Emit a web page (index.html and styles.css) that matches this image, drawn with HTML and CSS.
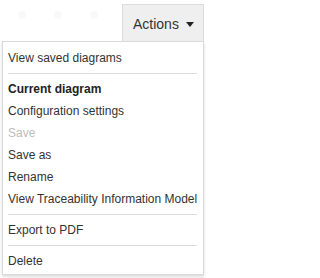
FILE: index.html
```html
<!DOCTYPE html>
<html>
<head>
<meta charset="utf-8">
<link rel="stylesheet" href="styles.css">
</head>
<body>
<div class="toolbar">
  <div class="icons">
    <span class="ghost"></span>
    <span class="ghost"></span>
    <span class="ghost"></span>
  </div>
  <div class="dropdown">
    <button class="actions">Actions <span class="caret"></span></button>
    <div class="menu">
      <div class="item">View saved diagrams</div>
      <div class="sep"></div>
      <div class="item heading">Current diagram</div>
      <div class="item">Configuration settings</div>
      <div class="item disabled">Save</div>
      <div class="item">Save as</div>
      <div class="item">Rename</div>
      <div class="item">View Traceability Information Model</div>
      <div class="sep"></div>
      <div class="item">Export to PDF</div>
      <div class="sep"></div>
      <div class="item">Delete</div>
    </div>
  </div>
</div>
</body>
</html>
```

FILE: styles.css
```css
html, body {
  margin: 0;
  padding: 0;
  background: #fff;
  font-family: "Liberation Sans", Arial, sans-serif;
  color: #333;
}
.toolbar {
  display: flex;
  justify-content: space-between;
  align-items: flex-start;
  width: 205px;
  box-sizing: border-box;
  padding-top: 4px;
  padding-right: 1px;
}
.icons {
  display: flex;
  gap: 28px;
  padding: 7px 0 0 18px;
}
.ghost {
  display: block;
  width: 8px;
  height: 8px;
  border-radius: 50%;
  background: #f9f9f9;
}
.dropdown {
  display: block;
}
.actions {
  display: flex;
  align-items: flex-start;
  gap: 7px;
  box-sizing: border-box;
  width: 82px;
  height: 44px;
  margin: 0;
  padding: 11px 10px 0 10px;
  border: 1px solid #dcdcdc;
  border-radius: 0;
  background: #efefef;
  font-family: "Liberation Sans", Arial, sans-serif;
  font-size: 14px;
  line-height: 16px;
  color: #333;
}
.caret {
  display: block;
  width: 0;
  height: 0;
  margin-top: 6px;
  border-left: 4px solid transparent;
  border-right: 4px solid transparent;
  border-top: 5px solid #222;
}
.menu {
  position: absolute;
  left: 2px;
  top: 41px;
  width: 202px;
  box-sizing: border-box;
  background: #fff;
  border: 1px solid #dadada;
  box-shadow: 0 2px 3px rgba(0, 0, 0, 0.14);
  padding: 5px 0 2px 0;
}
.item {
  font-size: 12px;
  line-height: 22px;
  padding: 0 5px;
  color: #333;
  white-space: nowrap;
}
.heading {
  font-weight: bold;
  color: #222;
}
.disabled {
  color: #bdbdbd;
}
.sep {
  height: 1px;
  margin: 4px 6px 4px 5px;
  background: #dcdcdc;
}
```
